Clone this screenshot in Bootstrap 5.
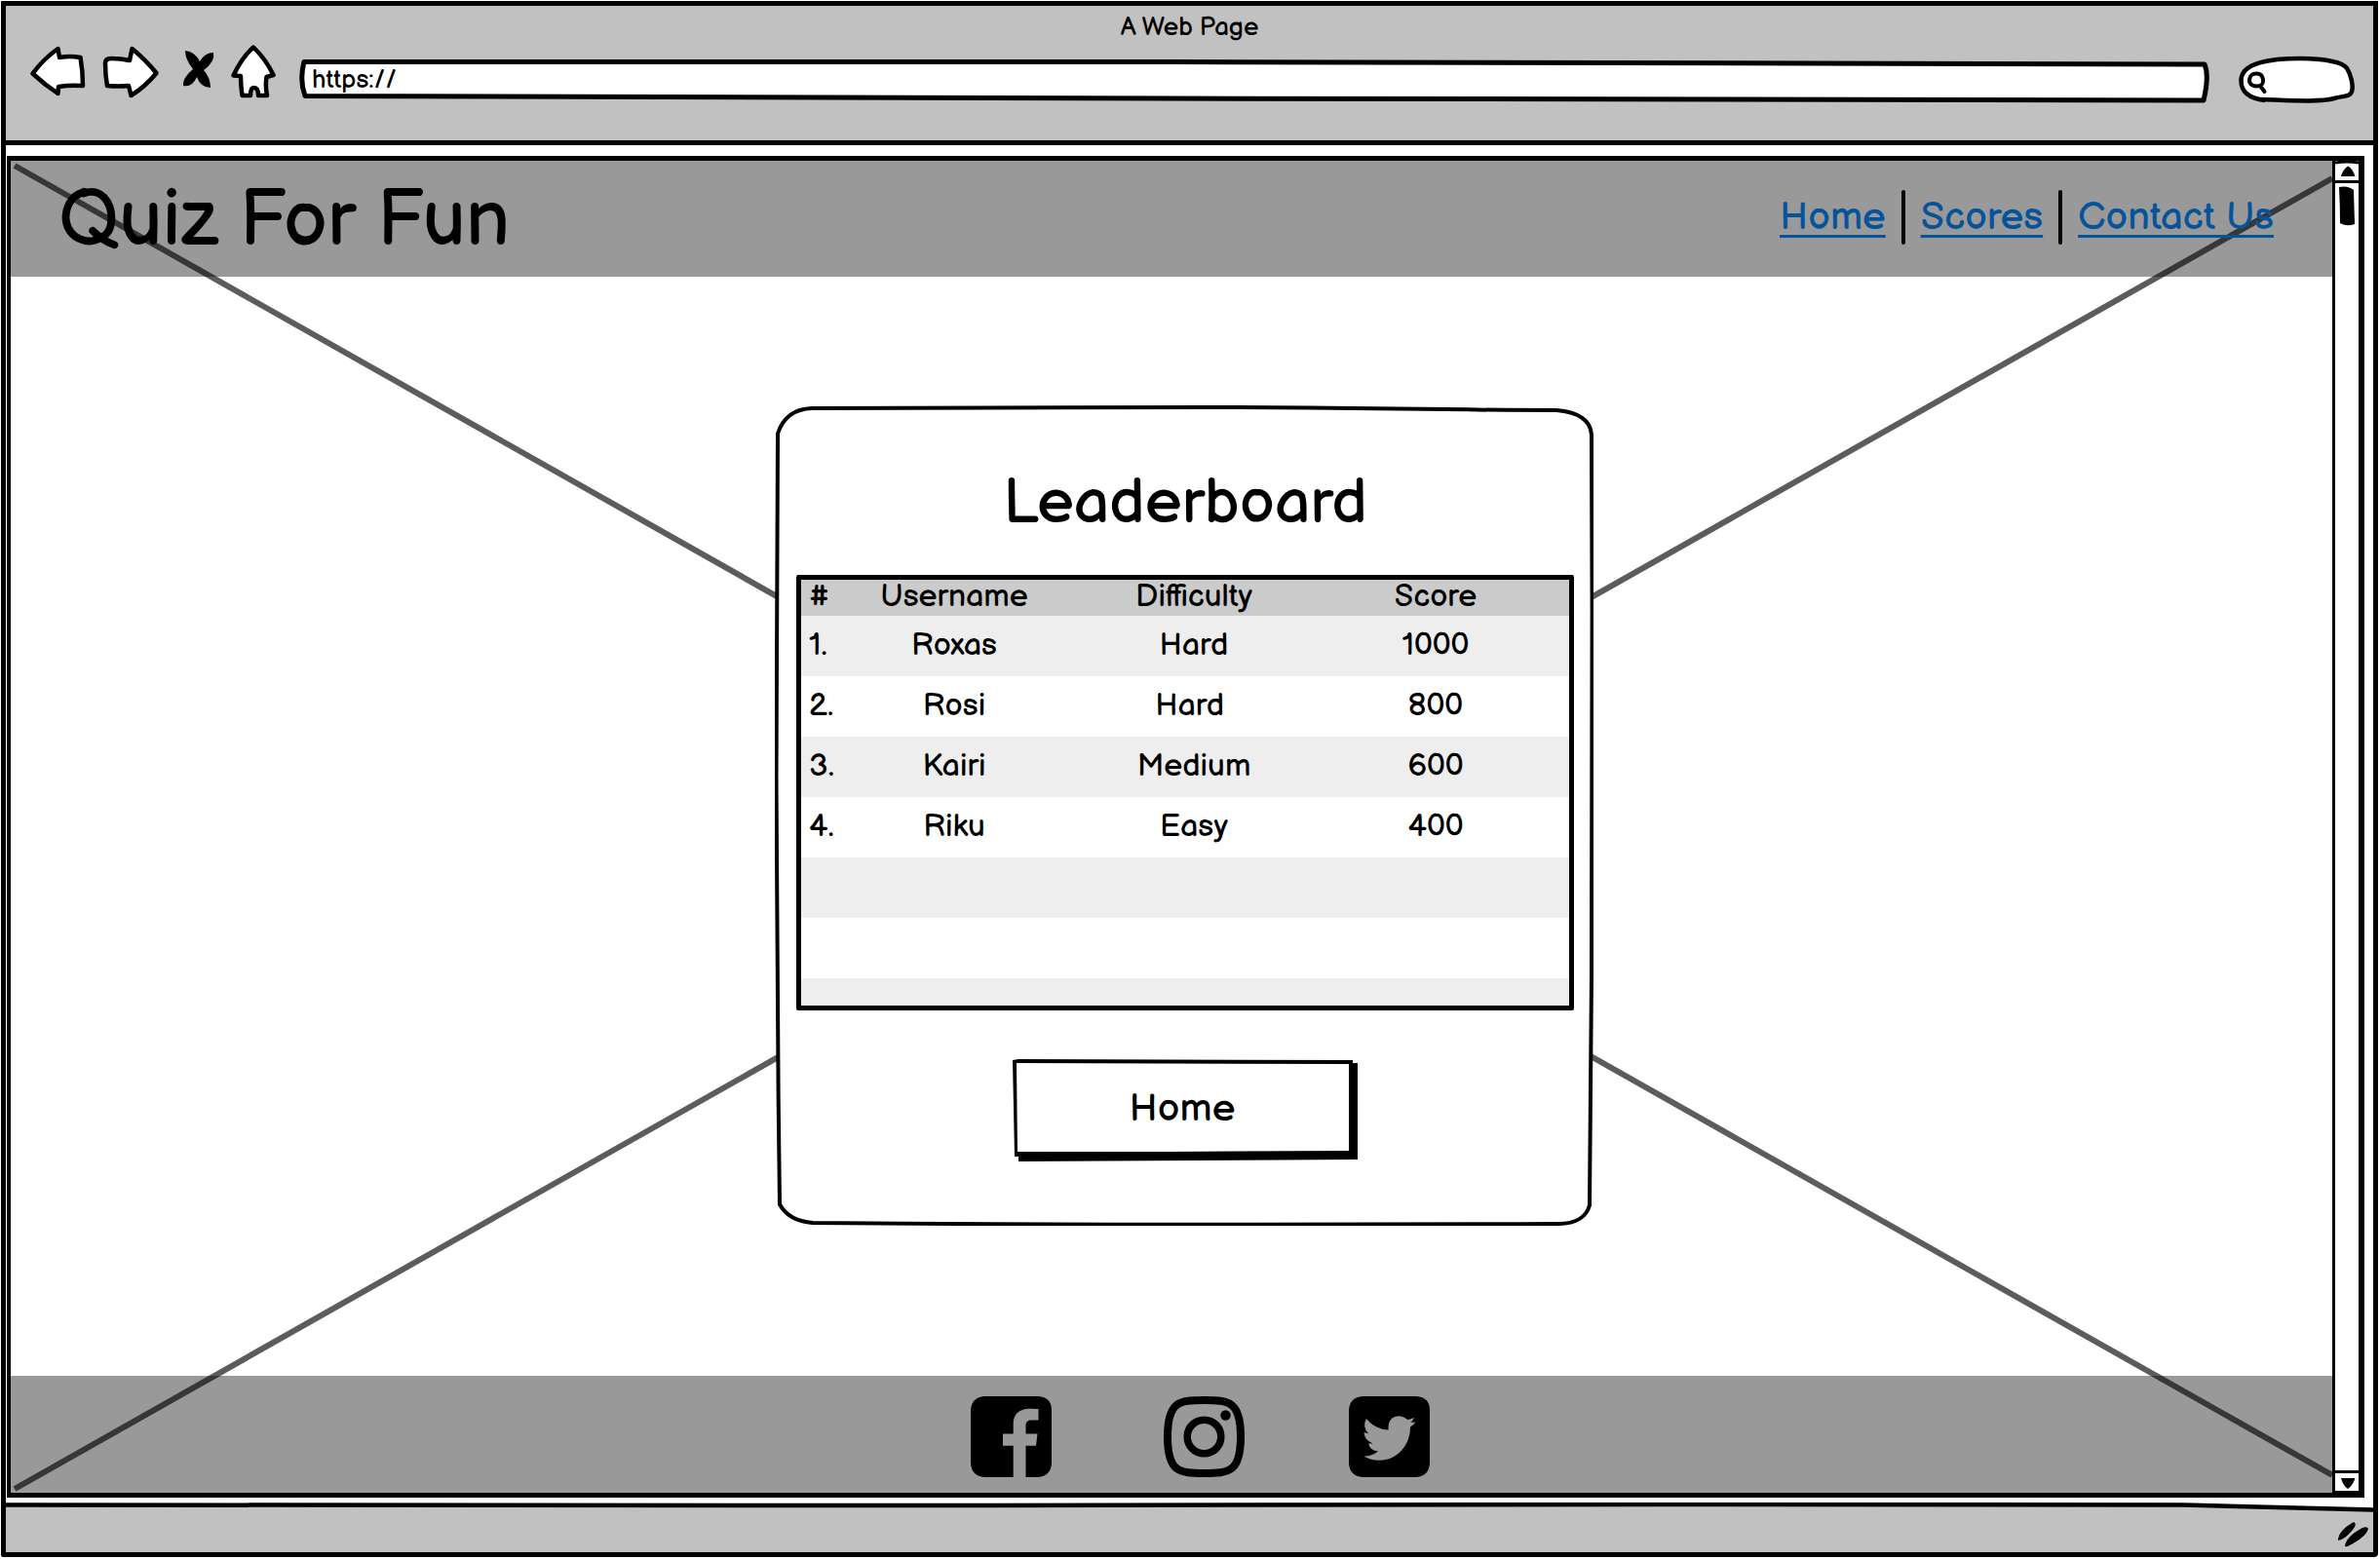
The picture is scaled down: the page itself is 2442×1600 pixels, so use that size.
<!DOCTYPE html>
<html lang="en">
<head>
<meta charset="utf-8">
<meta name="viewport" content="width=device-width, initial-scale=1">
<title>Quiz For Fun - Leaderboard</title>
<link href="https://cdn.jsdelivr.net/npm/bootstrap@5.3.0/dist/css/bootstrap.min.css" rel="stylesheet">
<style>
  body { font-family: "Balsamiq Sans", "Liberation Sans", sans-serif; color: #000; background: #fff; padding: 1px 2px 2px 1px; }
  .window { border: 5px solid #000; border-bottom-left-radius: 2px; border-bottom-right-radius: 4px; }
  .chrome { background: #c1c1c1; border-bottom: 5px solid #000; padding-bottom: 38px; }
  .chrome-title { font-size: 26px; line-height: 34px; padding-top: 6px; }
  .toolbar { padding: 0 17px 0 25px; gap: 16px; height: 60px; }
  .tool { display: block; padding: 0; border: 0; background: none; height: 60px; }
  .tool svg, .social svg { display: block; }
  .sketch { position: absolute; inset: 0; width: 100%; height: 100%; pointer-events: none; }
  .sketch path, .sketch line { vector-effect: non-scaling-stroke; }
  .address { height: 45px; }
  .address input { position: relative; border: 0; background: none; outline: 0; width: 100%; height: 42px; padding: 0 13px; font-size: 26px; color: #000; }
  .find { width: 122px; height: 60px; margin-left: 11px; }
  .find input { position: relative; border: 0; background: none; outline: 0; width: 80px; height: 36px; margin: 18px 0 0 32px; }
  .frame { margin: 11px 9px 5px 1px; border: solid #000; border-width: 5px 6px 5px 4px; }
  .band { background: rgba(0, 0, 0, .4); position: relative; }
  .site-head { height: 119px; padding: 0 60px 4px 49px; }
  .brand { font-size: 80px; line-height: 100px; margin: 0; padding-top: 8px; font-weight: 400; }
  .site-links { gap: 16px; font-size: 40px; line-height: 56px; }
  .site-links a { color: #07539a; text-decoration-thickness: 3px; text-underline-offset: 6px; text-decoration-skip-ink: none; }
  .rule { width: 4px; height: 56px; background: #000; border-radius: 2px; }
  .stage { position: relative; padding: 0 0 22px 26px; }
  .board { width: 840px; min-height: 842px; padding: 61px 20px 66px 22px; }
  .board h2 { font-size: 64px; line-height: 80px; margin: 0 0 33px; font-weight: 400; }
  .score-box { border: 5px solid #000; border-radius: 2px; }
  .scores { table-layout: fixed; width: 100%; font-size: 32px; text-align: center; }
  .scores th { font-weight: 400; background: #cbcbcb; line-height: 35px; padding: 0 0 2px; }
  .scores td { height: 62px; line-height: 62px; padding: 0; }
  .scores tbody tr:nth-child(odd) { background: #eee; }
  .scores tbody tr:last-child td { height: 28px; }
  .scores th:first-child, .scores td:first-child { text-align: left; padding-left: 8px; white-space: nowrap; }
  .scores th:last-child, .scores td:last-child { padding-right: 12px; }
  .col-rank { width: 34px; }
  .col-data { width: 246px; }
  .home-btn { width: 354px; height: 105px; margin-top: 50px; padding: 0 6px 3px 0; border: 0; background: none; font-size: 40px; color: #000; }
  .site-foot { height: 120px; padding: 5px 0 0 59px; gap: 107px; }
  .social { color: #000; }
  .scroller { width: 27px; border-left: 3px solid #000; }
  .scroller button { display: block; width: 24px; height: 23px; padding: 0; border: 0 solid #000; background: #fff; }
  .scroller svg { display: block; }
  .scroll-up { border-bottom-width: 3px !important; }
  .scroll-down { border-top-width: 3px !important; }
  .thumb { display: block; margin: 3px 0 0 4px; }
  .status { height: 51px; background: #c1c1c1; }
  .grip { position: relative; display: block; }
</style>
<script src="https://cdn.jsdelivr.net/npm/bootstrap@5.3.0/dist/js/bootstrap.bundle.min.js"></script>
</head>
<body class="d-flex flex-column min-vh-100">
<div class="window d-flex flex-column flex-grow-1">
  <header class="chrome">
    <div class="chrome-title text-center">A Web Page</div>
    <div class="toolbar d-flex">
      <button class="tool" type="button" aria-label="Back">
        <svg width="58" height="60" viewBox="31 46 58 60"><path d="M33.500 75.500Q45 60 59.500 50L61 59Q72 57 82.500 59Q85 73 85 88Q72 87 60 89L59.500 96Q46 87 33.500 75.500Z" fill="#fff" stroke="#000" stroke-width="4.500" stroke-linejoin="round"/></svg>
      </button>
      <button class="tool" type="button" aria-label="Forward">
        <svg width="66" height="60" viewBox="105 46 66 60"><path d="M108 65Q108 60 114 60Q124 60 133 62L135.500 50Q149 61 160.500 75Q149 89 134.500 98L132 88Q121 89 110 88Q108 77 108 65Z" fill="#fff" stroke="#000" stroke-width="4.500" stroke-linejoin="round"/></svg>
      </button>
      <button class="tool" type="button" aria-label="Stop">
        <svg width="34" height="60" viewBox="187 46 34 60"><path d="M190 52Q200 53 205 63Q210 54 219 54Q221 63 209 72Q216 80 216 90Q206 90 202 79Q197 90 188 88Q187 80 198 71Q190 61 190 52Z"/></svg>
      </button>
      <button class="tool" type="button" aria-label="Home page">
        <svg width="54" height="60" viewBox="237 46 54 60"><path d="M260 48.500Q273 61 280.500 77L273.500 79Q272 88 274 98H265Q265 90 260.500 90Q257 90 257 98H248.500Q247 88 247 78L239.500 77.500Q248 59 260 48.500Z" fill="#fff" stroke="#000" stroke-width="4.500" stroke-linejoin="round"/></svg>
      </button>
      <div class="address position-relative flex-grow-1 align-self-end">
        <svg class="sketch" viewBox="307 61 1961 45" preserveAspectRatio="none" aria-hidden="true"><path d="M312 63.500L1200 63.500L2261 66Q2266 78 2260 103L1200 101L313 98.500Q307 82 312 63.500Z" fill="#fff" stroke="#000" stroke-width="5" stroke-linejoin="round"/></svg>
        <input type="text" value="https://" aria-label="Address">
      </div>
      <div class="find position-relative">
        <svg class="sketch" viewBox="2296 46 122 60" aria-hidden="true"><path d="M2324 103C2308 101 2299.500 94 2299.500 83C2299 64 2330 60 2361 60C2385 60 2404 64 2408 70C2412 76 2415 88 2413 94C2411 100 2404 98 2395 101C2380 105 2350 103 2320 102" fill="#fff" stroke="#000" stroke-width="4.500"/><path d="M2315 75.500C2323 75 2324 86 2319 88C2309 90 2307 84 2308.500 80C2309 77 2312 75.500 2315 75.500ZM2319 88L2323.500 94" fill="none" stroke="#000" stroke-width="4" stroke-linecap="round"/></svg>
        <input type="text" aria-label="Search">
      </div>
    </div>
  </header>

  <div class="frame d-flex flex-grow-1">
    <div class="d-flex flex-column flex-grow-1 position-relative">
      <svg class="sketch" viewBox="0 0 2382 1367" preserveAspectRatio="none" aria-hidden="true"><path d="M4 5L2382 1349M4 1363L2382 18" stroke="#000" stroke-opacity=".64" stroke-width="6" fill="none"/></svg>
      <div class="band site-head d-flex align-items-center justify-content-between">
        <h1 class="brand">Quiz For Fun</h1>
        <nav class="site-links d-flex align-items-center" aria-label="Main">
          <a href="#home">Home</a><span class="rule"></span>
          <a href="#scores">Scores</a><span class="rule"></span>
          <a href="#contact">Contact Us</a>
        </nav>
      </div>

      <main class="stage flex-grow-1 d-flex align-items-center justify-content-center">
        <section class="board position-relative text-center">
          <svg class="sketch" viewBox="795 416 840 842" preserveAspectRatio="none" aria-hidden="true"><path d="M833 419C1000 419 1100 418 1240 418C1380 418 1480 421 1597 421C1620 423 1632 432 1633 446C1634 640 1634 900 1633 1000L1631 1237C1628 1248 1618 1256 1599 1256Q1200 1258 834 1255Q809 1253 800 1236C798 1080 796 900 796.500 800L798 445Q806 420 833 419Z" fill="#fff" stroke="#000" stroke-width="4"/></svg>
          <div class="position-relative">
            <h2>Leaderboard</h2>
            <div class="score-box">
              <table class="scores">
                <colgroup><col class="col-rank"><col class="col-data"><col class="col-data"><col></colgroup>
                <thead><tr><th scope="col">#</th><th scope="col">Username</th><th scope="col">Difficulty</th><th scope="col">Score</th></tr></thead>
                <tbody>
                  <tr><td>1.</td><td>Roxas</td><td>Hard</td><td>1000</td></tr>
                  <tr><td>2.</td><td>Rosi</td><td>Hard&nbsp;</td><td>800</td></tr>
                  <tr><td>3.</td><td>Kairi</td><td>Medium</td><td>600</td></tr>
                  <tr><td>4.</td><td>Riku</td><td>Easy</td><td>400</td></tr>
                  <tr><td></td><td></td><td></td><td></td></tr>
                  <tr><td></td><td></td><td></td><td></td></tr>
                  <tr><td></td><td></td><td></td><td></td></tr>
                </tbody>
              </table>
            </div>
            <button class="home-btn position-relative" type="button">
              <svg class="sketch" viewBox="1040 1087 354 105" preserveAspectRatio="none" aria-hidden="true"><path d="M1040 1088L1046 1087L1389 1088V1091H1394V1190L1046 1192V1187H1042Z"/><path d="M1044 1091L1385 1092V1181L1200 1182H1045Z" fill="#fff"/></svg>
              <span class="position-relative">Home</span>
            </button>
          </div>
        </section>
      </main>

      <footer class="band site-foot d-flex align-items-center justify-content-center">
        <a class="social" href="#facebook" aria-label="Facebook">
          <svg width="83" height="83" viewBox="0 0 83 83"><path d="M14 0H69Q83 1 83 14V69Q82 82 69 83H56.500V50.700H67L68.500 38.500H56.500V30Q56.500 24.500 62 24.500H69.500V13Q64 12.500 59 12.700Q43.700 14 43.700 28V38.500H33V50.700H43.700V83H14Q1 82 0 69V14Q1 1 14 0Z"/></svg>
        </a>
        <a class="social ms-2" href="#instagram" aria-label="Instagram">
          <svg width="83" height="83" viewBox="0 0 83 83"><path d="M41.500 4C67 4 79 5 79 41.500S67 79 41.500 79S4 78 4 41.500S16 4 41.500 4Z" fill="none" stroke="#000" stroke-width="8"/><circle cx="41.500" cy="41.500" r="17.300" fill="none" stroke="#000" stroke-width="7.500"/><circle cx="63.500" cy="19.500" r="5.200"/></svg>
        </a>
        <a class="social" href="#twitter" aria-label="Twitter">
          <svg width="83" height="83" viewBox="0 0 83 83"><path fill-rule="evenodd" d="M14 0H69Q83 1 83 14V69Q82 82 69 83H14Q1 82 0 69V14Q1 1 14 0ZM17.900 23Q27 34 40.600 34.600C40 25 44 20.500 52 20.300Q57 21 60.300 24Q64 23.500 66.800 21.700Q66 25 63.400 26.800Q66 27 68.500 26.200Q66.500 29.500 63 31.500C63 50 50 65.700 31.300 65.700Q22 65.700 15.200 61.500Q24 61.500 30 56.500Q22 56 20 48.500H24.500Q16 45 15.500 37L20 38.200Q13.500 31 17.900 23Z"/></svg>
        </a>
      </footer>
    </div>

    <div class="scroller d-flex flex-column flex-shrink-0">
      <button class="scroll-up" type="button" aria-label="Scroll up"><svg width="24" height="20" viewBox="0 0 24 20"><path d="M0 2Q12 0 24 2" fill="none" stroke="#000" stroke-width="3"/><path d="M6 16Q8 9 13 5.500Q18 8 20.500 16Z"/></svg></button>
      <svg class="thumb" width="16" height="41" viewBox="0 0 16 41" aria-hidden="true"><path d="M0 1Q9 -1 15 4L16 39Q8 42 1 38Q1 20 0 1Z"/></svg>
      <button class="scroll-down mt-auto" type="button" aria-label="Scroll down"><svg width="24" height="20" viewBox="0 0 24 20"><path d="M6 5H20.500Q18 13 13 16Q8 13 6 5Z"/><path d="M0 19H24" stroke="#000" stroke-width="2"/></svg></button>
    </div>
  </div>

  <div class="status position-relative d-flex justify-content-end">
    <svg class="sketch" viewBox="6 1542 2429 51" preserveAspectRatio="none" aria-hidden="true"><path d="M6 1542H2435V1549L2240 1545L1500 1544L6 1544Z" fill="#fff"/><path d="M6 1544.500L1000 1545L1700 1544L2240 1544.500L2435 1549.500" fill="none" stroke="#000" stroke-width="4.500"/></svg>
    <svg class="grip" width="38" height="51" viewBox="2397 1542 38 51" aria-hidden="true"><path d="M2399 1581Q2399 1571 2415 1562Q2419 1564 2414 1570Q2406 1580 2399 1581ZM2406 1587Q2407 1577 2424 1568Q2429 1566 2430 1569Q2428 1576 2416 1583Q2409 1588 2406 1587Z"/></svg>
  </div>
</div>
</body>
</html>
